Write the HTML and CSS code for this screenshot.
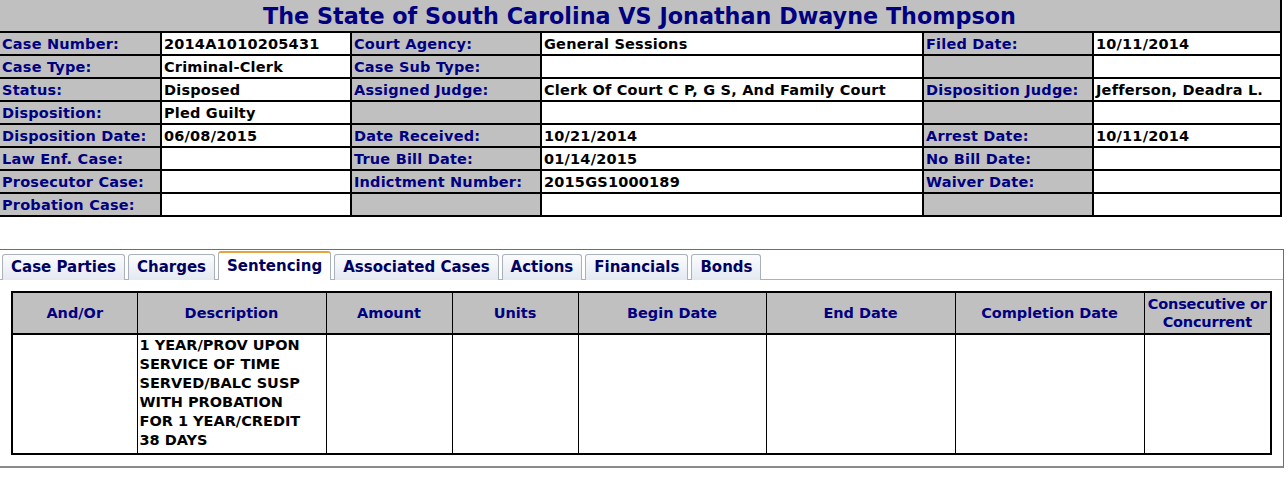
FILE: index.html
```html
<!DOCTYPE html>
<html>
<head>
<meta charset="utf-8">
<link rel="stylesheet" href="styles.css">
</head>
<body>
<table class="case">
  <colgroup>
    <col style="width:162px"><col style="width:190px"><col style="width:190px"><col style="width:382px"><col style="width:170px"><col style="width:188px">
  </colgroup>
  <tr><th colspan="6" class="title">The State of South Carolina VS Jonathan Dwayne Thompson</th></tr>
  <tr><td class="lbl">Case Number:</td><td class="val">2014A1010205431</td><td class="lbl">Court Agency:</td><td class="val">General Sessions</td><td class="lbl">Filed Date:</td><td class="val">10/11/2014</td></tr>
  <tr><td class="lbl">Case Type:</td><td class="val">Criminal-Clerk</td><td class="lbl">Case Sub Type:</td><td class="val"></td><td class="lbl"></td><td class="val"></td></tr>
  <tr><td class="lbl">Status:</td><td class="val">Disposed</td><td class="lbl">Assigned Judge:</td><td class="val">Clerk Of Court C P, G S, And Family Court</td><td class="lbl">Disposition Judge:</td><td class="val">Jefferson, Deadra L.</td></tr>
  <tr><td class="lbl">Disposition:</td><td class="val">Pled Guilty</td><td class="lbl"></td><td class="val"></td><td class="lbl"></td><td class="val"></td></tr>
  <tr><td class="lbl">Disposition Date:</td><td class="val">06/08/2015</td><td class="lbl">Date Received:</td><td class="val">10/21/2014</td><td class="lbl">Arrest Date:</td><td class="val">10/11/2014</td></tr>
  <tr><td class="lbl">Law Enf. Case:</td><td class="val"></td><td class="lbl">True Bill Date:</td><td class="val">01/14/2015</td><td class="lbl">No Bill Date:</td><td class="val"></td></tr>
  <tr><td class="lbl">Prosecutor Case:</td><td class="val"></td><td class="lbl">Indictment Number:</td><td class="val">2015GS1000189</td><td class="lbl">Waiver Date:</td><td class="val"></td></tr>
  <tr><td class="lbl">Probation Case:</td><td class="val"></td><td class="lbl"></td><td class="val"></td><td class="lbl"></td><td class="val"></td></tr>
</table>

<div class="panel">
  <div class="tabs">
    <div class="tab">Case Parties</div>
    <div class="tab">Charges</div>
    <div class="tab active">Sentencing</div>
    <div class="tab">Associated Cases</div>
    <div class="tab">Actions</div>
    <div class="tab">Financials</div>
    <div class="tab">Bonds</div>
  </div>
  <div class="tabbody">
    <table class="sent">
      <colgroup>
        <col style="width:125px"><col style="width:189px"><col style="width:126px"><col style="width:126px"><col style="width:188px"><col style="width:189px"><col style="width:189px"><col style="width:127px">
      </colgroup>
      <tr>
        <th>And/Or</th><th>Description</th><th>Amount</th><th>Units</th><th>Begin Date</th><th>End Date</th><th>Completion Date</th><th class="nw">Consecutive or<br>Concurrent</th>
      </tr>
      <tr>
        <td></td><td class="desc">1 YEAR/PROV UPON<br>SERVICE OF TIME<br>SERVED/BALC SUSP<br>WITH PROBATION<br>FOR 1 YEAR/CREDIT<br>38 DAYS</td><td></td><td></td><td></td><td></td><td></td><td></td>
      </tr>
    </table>
  </div>
</div>
</body>
</html>
```

FILE: styles.css
```css
html, body {
  margin: 0;
  padding: 0;
  background: #fff;
}
body {
  font-family: "DejaVu Sans", Verdana, sans-serif;
  font-weight: bold;
  font-size: 14.5px;
}
.case {
  border-collapse: collapse;
  table-layout: fixed;
  width: 1282px;
  margin-left: -2px;
}
.case td {
  border: 2px solid #000;
  height: 21px;
  padding: 0 2px;
  line-height: 20px;
  white-space: nowrap;
  overflow: hidden;
  letter-spacing: 0.2px;
}
.case .title {
  background: #c0c0c0;
  color: #000080;
  font-size: 22.3px;
  height: 31px;
  padding: 0;
  border: 2px solid #000;
  border-top: none;
  border-left: none;
  line-height: 30px;
  text-align: center;
}
.lbl {
  background: #c0c0c0;
  color: #000080;
}
.val {
  background: #fff;
  color: #000;
}
.panel {
  margin-top: 32px;
  width: 1283px;
  border: 1px solid #6e6e6e;
  border-left: none;
  border-bottom: 2px solid #8a8a8a;
  padding-top: 2px;
}
.tabs {
  display: flex;
  gap: 3px;
  padding-left: 2px;
  border-bottom: 1px solid #a9b1bd;
  height: 27px;
  align-items: flex-end;
}
.tab {
  height: 25px;
  line-height: 25px;
  padding: 0 8px;
  color: #000060;
  border: 1px solid #a9b1bd;
  border-bottom: none;
  border-radius: 3px 3px 0 0;
  background: linear-gradient(#fbfcfd, #e4e9f1);
  margin-bottom: -1px;
  font-size: 15px;
}
.tab.active {
  background: #fff;
  border-top: 2px solid #e8a33a;
  height: 27px;
  line-height: 27px;
}
.tabbody {
  padding: 11px 12px 11px 11px;
}
.sent {
  border-collapse: collapse;
  table-layout: fixed;
  width: 1260px;
  border: 2px solid #000;
}
.sent th {
  background: #c0c0c0;
  color: #000080;
  border: 1px solid #000;
  border-bottom: 2px solid #000;
  height: 40px;
  padding: 0 2px;
  line-height: 18px;
  text-align: center;
  vertical-align: middle;
}
.sent th.nw {
  padding: 0;
  white-space: nowrap;
  letter-spacing: -0.2px;
}
.sent td {
  border: 1px solid #000;
  height: 117px;
  padding: 0 2px;
  vertical-align: top;
  color: #000;
  line-height: 19px;
}
.sent td.desc {
  padding-top: 1px;
}
```
